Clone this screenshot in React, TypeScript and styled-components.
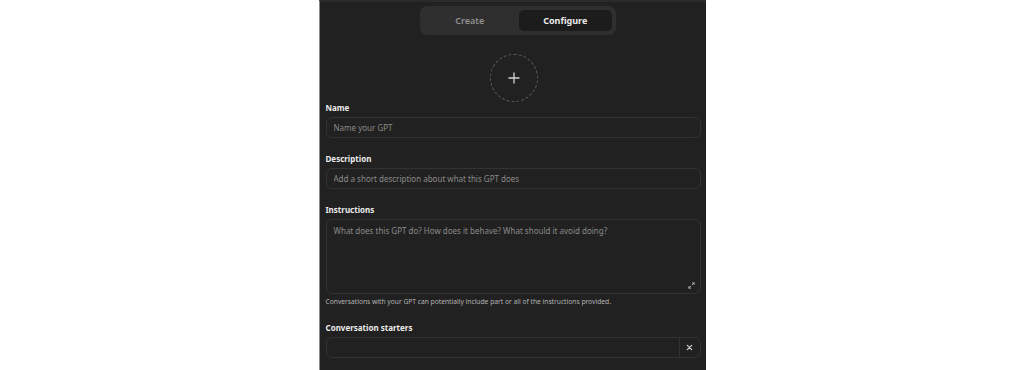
import styled, { createGlobalStyle } from "styled-components";

const GlobalStyle = createGlobalStyle`
    html, body {
        margin: 0;
        padding: 0;
        background: #ffffff;
    }
    body {
        font-family: "Noto Sans", "Open Sans", sans-serif;
    }
`;

const Page = styled.div`
    display: flex;
    justify-content: center;
    height: 370px;
    overflow: hidden;
`;

const Panel = styled.div`
    width: 387px;
    box-sizing: border-box;
    background: #212121;
    border-left: 1px solid #8a8a8a;
    border-top: 2px solid #2a2a2a;
    padding: 4px 5px 0 6px;
    display: flex;
    flex-direction: column;
`;

const Tabs = styled.div`
    align-self: center;
    margin-left: 9px;
    display: grid;
    grid-template-columns: 1fr 1fr;
    gap: 3px;
    width: 196px;
    height: 29px;
    box-sizing: border-box;
    padding: 4px;
    border-radius: 7px;
    background: #2f2f2f;
`;

const Tab = styled.button<{ $active?: boolean }>`
    border: none;
    border-radius: 5px;
    font-family: inherit;
    font-size: 9px;
    font-weight: ${p => (p.$active ? 700 : 600)};
    color: ${p => (p.$active ? "#ececec" : "#8f8f8f")};
    background: ${p => (p.$active ? "#1c1c1c" : "transparent")};
    padding: 0;
    cursor: pointer;
`;

const Avatar = styled.div`
    align-self: center;
    margin: 19px 0 0 1px;
    width: 46px;
    height: 46px;
    border-radius: 50%;
    border: 1px dashed #5a5a5a;
    display: flex;
    align-items: center;
    justify-content: center;
    color: #d6d6d6;
`;

const Field = styled.div<{ $gap?: number }>`
    display: flex;
    flex-direction: column;
    margin-top: ${p => p.$gap ?? 15}px;
`;

const Label = styled.label`
    font-size: 8px;
    font-weight: 700;
    line-height: 12px;
    color: #ececec;
    margin-bottom: 3px;
`;

const Input = styled.input`
    height: 21px;
    box-sizing: border-box;
    border: 1px solid #333333;
    border-radius: 6px;
    background: #212121;
    padding: 0 7px;
    font-family: inherit;
    font-size: 8px;
    color: #ececec;
    outline: none;
    &::placeholder {
        color: #8a8a8a;
    }
`;

const AreaWrap = styled.div`
    position: relative;
    display: flex;
`;

const TextArea = styled.textarea`
    flex: 1;
    height: 75px;
    box-sizing: border-box;
    border: 1px solid #333333;
    border-radius: 6px;
    background: #212121;
    padding: 5px 7px;
    font-family: inherit;
    font-size: 8px;
    line-height: 12px;
    color: #ececec;
    resize: none;
    outline: none;
    &::placeholder {
        color: #8a8a8a;
    }
`;

const ExpandButton = styled.span`
    position: absolute;
    right: 6px;
    bottom: 5px;
    display: flex;
    color: #b4b4b4;
`;

const Hint = styled.div`
    font-size: 6.7px;
    line-height: 10px;
    color: #b4b4b4;
    margin-top: 3px;
`;

const StarterRow = styled.div`
    display: flex;
    height: 21px;
    box-sizing: border-box;
    border: 1px solid #333333;
    border-radius: 6px;
    overflow: hidden;
`;

const StarterInput = styled.input`
    flex: 1;
    min-width: 0;
    border: none;
    background: transparent;
    padding: 0 7px;
    font-family: inherit;
    font-size: 8px;
    color: #ececec;
    outline: none;
`;

const RemoveButton = styled.button`
    width: 21px;
    border: none;
    border-left: 1px solid #333333;
    background: transparent;
    color: #d0d0d0;
    display: flex;
    align-items: center;
    justify-content: center;
    padding: 0;
`;

export default function App() {
    return <>
        <GlobalStyle/>
        <Page>
            <Panel>
                <Tabs>
                    <Tab>Create</Tab>
                    <Tab $active>Configure</Tab>
                </Tabs>
                <Avatar>
                    <svg width="12" height="12" viewBox="0 0 12 12" fill="none" stroke="currentColor" strokeWidth="1.3" strokeLinecap="round">
                        <path d="M6 1v10M1 6h10"/>
                    </svg>
                </Avatar>
                <Field $gap={0}>
                    <Label>Name</Label>
                    <Input placeholder="Name your GPT"/>
                </Field>
                <Field>
                    <Label>Description</Label>
                    <Input placeholder="Add a short description about what this GPT does"/>
                </Field>
                <Field>
                    <Label>Instructions</Label>
                    <AreaWrap>
                        <TextArea placeholder="What does this GPT do? How does it behave? What should it avoid doing?"/>
                        <ExpandButton>
                            <svg width="7" height="7" viewBox="0 0 8 8" fill="none" stroke="currentColor" strokeWidth="1" strokeLinecap="round">
                                <path d="M5 1h2v2M7 1L4.8 3.2M3 7H1V5M1 7l2.2-2.2"/>
                            </svg>
                        </ExpandButton>
                    </AreaWrap>
                    <Hint>Conversations with your GPT can potentially include part or all of the instructions provided.</Hint>
                </Field>
                <Field $gap={15}>
                    <Label>Conversation starters</Label>
                    <StarterRow>
                        <StarterInput/>
                        <RemoveButton>
                            <svg width="7" height="7" viewBox="0 0 8 8" fill="none" stroke="currentColor" strokeWidth="1.4" strokeLinecap="round">
                                <path d="M1.5 1.5l5 5M6.5 1.5l-5 5"/>
                            </svg>
                        </RemoveButton>
                    </StarterRow>
                </Field>
            </Panel>
        </Page>
    </>
}
